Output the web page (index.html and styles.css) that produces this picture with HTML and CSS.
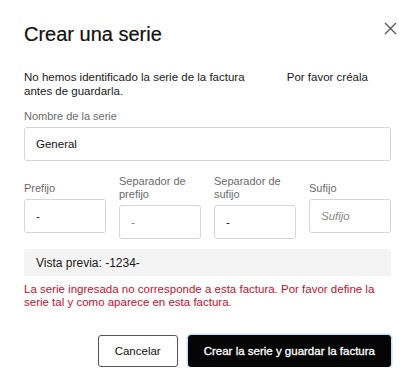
FILE: index.html
```html
<!DOCTYPE html>
<html lang="es">
<head>
    <meta charset="UTF-8" />
    <meta name="viewport" content="width=device-width, initial-scale=1.0"/>
    <title>Crear una serie</title>
    <link rel="stylesheet" href="styles.css">
</head>
<body>
    <div class="modal">
        <header class="modal-header">
            <h1>Crear una serie</h1>
            <button class="btn-close" aria-label="Cerrar">
                <svg width="13" height="13" viewBox="0 0 13 13">
                    <path d="M1 1 L12 12 M12 1 L1 12" stroke="#5a5a5a" stroke-width="1.4" fill="none"/>
                </svg>
            </button>
        </header>

        <p class="intro">No hemos identificado la serie de la factura <span class="hint">Por favor créala antes de guardarla.</span></p>

        <div class="field">
            <label for="nombre">Nombre de la serie</label>
            <input id="nombre" type="text" value="General">
        </div>

        <div class="field-row">
            <div class="field">
                <label for="prefijo">Prefijo</label>
                <input id="prefijo" type="text" value="-">
            </div>
            <div class="field">
                <label for="sep-prefijo">Separador de prefijo</label>
                <input id="sep-prefijo" type="text" placeholder="-">
            </div>
            <div class="field">
                <label for="sep-sufijo">Separador de sufijo</label>
                <input id="sep-sufijo" type="text" value="-">
            </div>
            <div class="field">
                <label for="sufijo">Sufijo</label>
                <input id="sufijo" type="text" placeholder="Sufijo">
            </div>
        </div>

        <div class="preview">Vista previa: -1234-</div>

        <p class="error">La serie ingresada no corresponde a esta factura. Por favor define la serie tal y como aparece en esta factura.</p>

        <div class="actions">
            <button class="btn btn-secondary">Cancelar</button>
            <button class="btn btn-primary">Crear la serie y guardar la factura</button>
        </div>
    </div>
</body>
</html>
```

FILE: styles.css
```css
* {
    margin: 0;
    padding: 0;
    box-sizing: border-box;
}

body {
    font-family: 'Liberation Sans', Arial, sans-serif;
    background: #ffffff;
    color: #1a1a1a;
}

.modal {
    width: 415px;
    padding: 22px 24px 0 24px;
}

.modal-header {
    display: flex;
    justify-content: space-between;
    align-items: flex-start;
}

.modal-header h1 {
    font-size: 20px;
    line-height: 24px;
    font-weight: normal;
    color: #111;
    -webkit-text-stroke: 0.2px #111;
}

.btn-close {
    background: none;
    border: none;
    margin-right: -6px;
    width: 13px;
    height: 13px;
    cursor: pointer;
}

.btn-close svg {
    display: block;
}

.intro {
    margin-top: 24px;
    font-size: 11.5px;
    line-height: 14px;
}

.intro .hint {
    padding-left: 39px;
}

.field {
    display: flex;
    flex-direction: column;
    gap: 4px;
}

.intro + .field {
    margin-top: 12px;
}

label {
    font-size: 11px;
    line-height: 13px;
    color: #6b6b6b;
}

input {
    height: 34px;
    width: 100%;
    border: 1px solid #d6d6d6;
    border-radius: 3px;
    padding: 0 11px;
    font-family: inherit;
    font-size: 11.5px;
    color: #111;
    background: #fff;
}

input::placeholder {
    color: #8a8a8a;
    font-style: italic;
}

.field-row {
    display: grid;
    grid-template-columns: repeat(4, 1fr);
    column-gap: 13px;
    align-items: center;
    margin-top: 14px;
}

.preview {
    margin-top: 10px;
    background: #f4f4f4;
    border-radius: 3px;
    height: 27px;
    padding: 0 12px;
    display: flex;
    align-items: center;
    font-size: 12px;
    color: #1a1a1a;
}

.error {
    margin-top: 7px;
    font-size: 11.5px;
    line-height: 13px;
    color: #c8102e;
}

.actions {
    display: flex;
    justify-content: flex-end;
    gap: 10px;
    margin-top: 26px;
}

.btn {
    height: 32px;
    border-radius: 3px;
    font-family: inherit;
    font-size: 11.5px;
    cursor: pointer;
}

.btn-secondary {
    width: 80px;
    background: #fff;
    border: 1px solid #555;
    color: #111;
}

.btn-primary {
    padding: 0 15px;
    background: #050505;
    border: 1px solid #050505;
    color: #fff;
    -webkit-text-stroke: 0.3px #fff;
    white-space: nowrap;
    box-shadow: 0 0 0 1.5px #c4e2f8;
}
```
